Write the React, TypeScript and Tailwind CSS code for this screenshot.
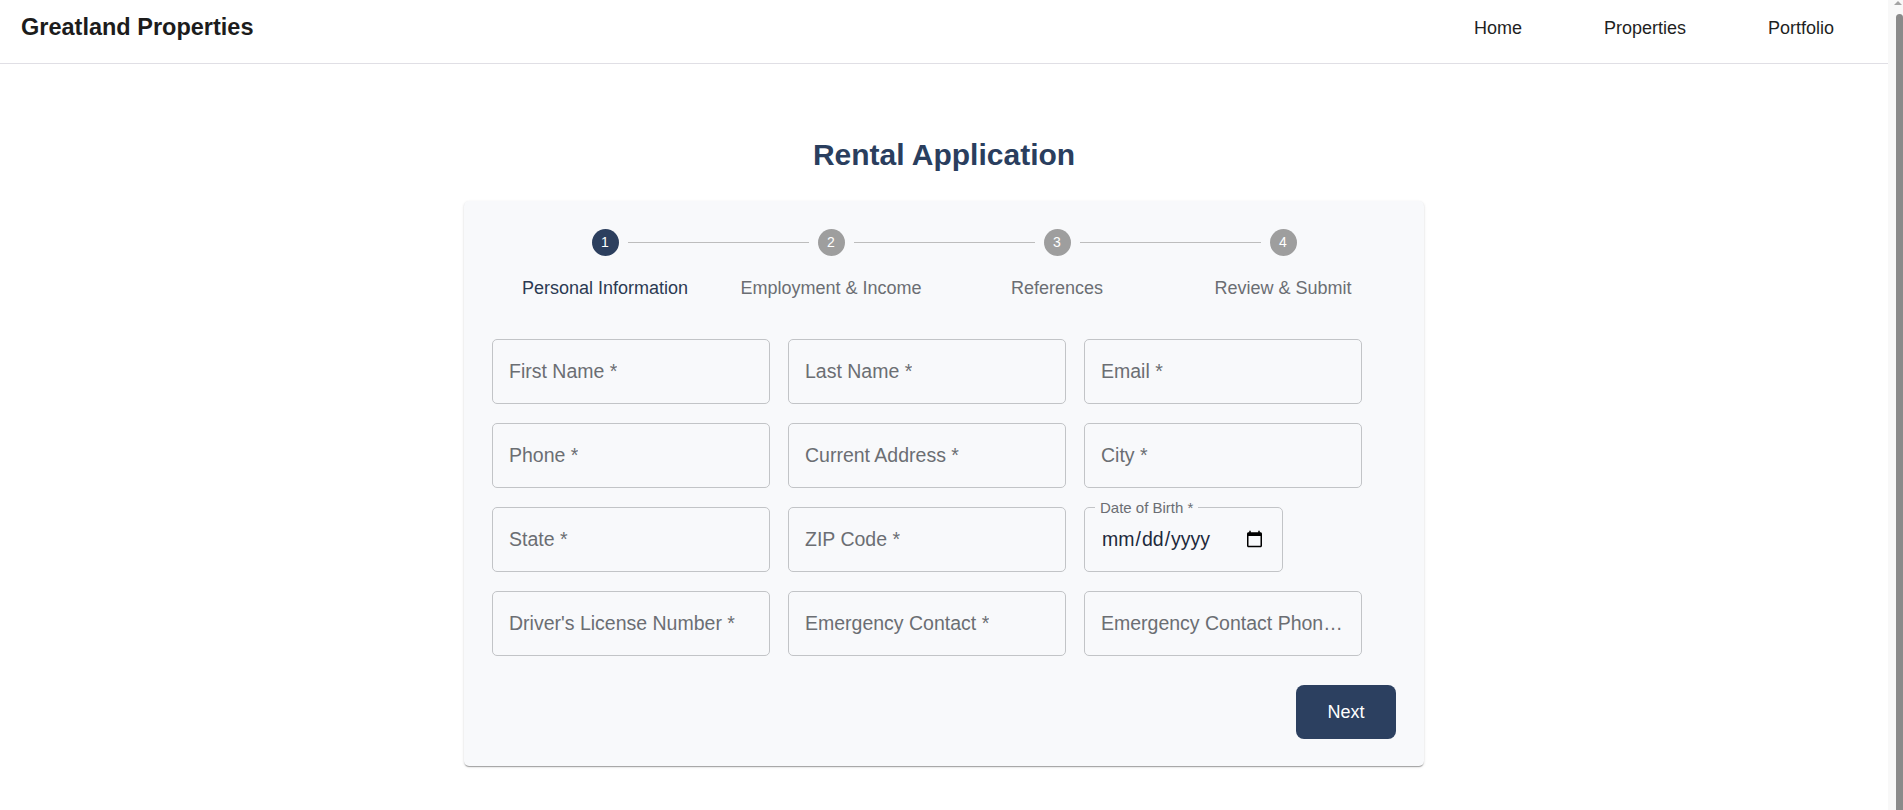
import { useState } from "react";

const STEPS = ["Personal Information", "Employment & Income", "References", "Review & Submit"];

const FIELDS = [
  "First Name *",
  "Last Name *",
  "Email *",
  "Phone *",
  "Current Address *",
  "City *",
  "State *",
  "ZIP Code *",
  null,
  "Driver's License Number *",
  "Emergency Contact *",
  "Emergency Contact Phone *",
];

function Header() {
  return (
    <header className="flex h-16 items-center justify-between border-b border-[#e0dfe5] bg-white pb-[7px] pl-[21px] pr-[54px]">
      <span className="text-[23.5px] font-bold text-[#1c1c1c]">Greatland Properties</span>
      <nav className="flex items-center gap-[82px] text-[18px] text-[#1f1f1f]">
        <a href="#">Home</a>
        <a href="#">Properties</a>
        <a href="#">Portfolio</a>
      </nav>
    </header>
  );
}

function Stepper({ active }: { active: number }) {
  return (
    <div className="flex">
      {STEPS.map((label, i) => (
        <div key={label} className="flex flex-1 flex-col items-center">
          <div className="flex h-[27px] w-full items-center">
            <div className={i === 0 ? "flex-1" : "h-px flex-1 bg-[#bdbdbd]"} />
            <div
              className={
                "mx-[9px] flex size-[27px] items-center justify-center rounded-full text-[14px] text-white " +
                (i === active ? "bg-[#2c3f5e]" : "bg-[#9e9e9e]")
              }
            >
              {i + 1}
            </div>
            <div className={i === STEPS.length - 1 ? "flex-1" : "h-px flex-1 bg-[#bdbdbd]"} />
          </div>
          <span
            className={
              "mt-[19px] text-[18px] leading-[27px] " + (i === active ? "text-[#2b3a52]" : "text-[#6b6e73]")
            }
          >
            {label}
          </span>
        </div>
      ))}
    </div>
  );
}

function TextField({ label }: { label: string }) {
  return (
    <label className="flex h-[65px] min-w-0 items-center rounded-[5px] border border-[#c2c4c7] pl-4 pr-[14px] text-[19.5px] text-[#6b6e73]">
      <span className="truncate">{label}</span>
    </label>
  );
}

function DateField() {
  return (
    <div className="relative flex h-[65px] w-[199px] items-center rounded-[5px] border border-[#c2c4c7]">
      <span className="absolute left-[10px] top-[-9px] bg-[#f8f9fb] px-[5px] text-[15px] leading-[18px] text-[#6b6e73]">
        Date of Birth *
      </span>
      <input
        type="date"
        className="h-full w-full bg-transparent pl-4 pr-[16px] text-[19.5px] text-[#1e2a3c] outline-none"
      />
    </div>
  );
}

// stand-in for the page scrollbar seen in the reference
function ScrollTrack() {
  return (
    <div className="flex h-[810px] w-[15px] shrink-0 flex-col items-end bg-[#f8f8f8]">
      <div className="mr-[1px] mt-[1px] h-0 w-0 border-x-[4px] border-b-[4px] border-x-transparent border-b-[#a3a3a3]" />
      <div className="mt-[9px] w-[7px] flex-1 rounded-t-[4px] bg-[#8a8a8a]" />
    </div>
  );
}

export default function App() {
  const [step] = useState(0);

  return (
    <div className="flex bg-white font-['Liberation_Sans',Arial,sans-serif]">
      <div className="w-[1888px] shrink-0">
        <Header />
        <main className="flex flex-col items-center pb-16 pt-[73px]">
          <h1 className="mb-7 text-[30px] font-bold leading-[36px] text-[#2a3e5e]">Rental Application</h1>
          <div className="w-[960px] rounded-[5px] bg-[#f8f9fb] px-7 pb-[27px] pt-7 shadow-[0_2px_1px_-1px_rgba(0,0,0,0.2),0_1px_1px_0_rgba(0,0,0,0.14),0_1px_3px_0_rgba(0,0,0,0.12)]">
            <Stepper active={step} />
            <div className="mt-[37px] grid grid-cols-[repeat(3,278px)] gap-x-[18px] gap-y-[19px]">
              {FIELDS.map((f, i) =>
                f ? <TextField key={i} label={f} /> : <DateField key={i} />,
              )}
            </div>
            <div className="mt-[29px] flex justify-end">
              <button
                type="button"
                className="h-[54px] w-[100px] rounded-lg bg-[#2c4060] text-[18px] font-medium text-white"
              >
                Next
              </button>
            </div>
          </div>
        </main>
      </div>
      <ScrollTrack />
    </div>
  );
}
